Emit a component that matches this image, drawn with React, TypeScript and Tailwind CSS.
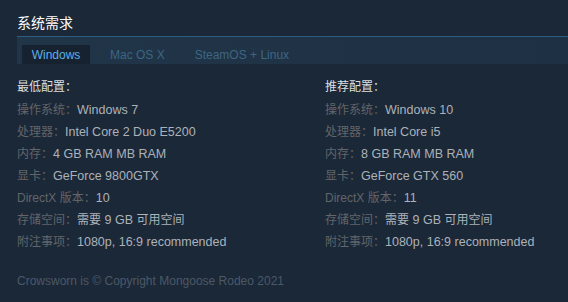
import React from "react";

const font = { fontFamily: '"Liberation Sans", Arial, "Noto Sans CJK SC", sans-serif' };

type Row = [string, string];

const minRows: Row[] = [
  ["操作系统：", "Windows 7"],
  ["处理器：", "Intel Core 2 Duo E5200"],
  ["内存：", "4 GB RAM MB RAM"],
  ["显卡：", "GeForce 9800GTX"],
  ["DirectX 版本：", "10"],
  ["存储空间：", "需要 9 GB 可用空间"],
  ["附注事项：", "1080p, 16:9 recommended"],
];
const recRows: Row[] = [
  ["操作系统：", "Windows 10"],
  ["处理器：", "Intel Core i5"],
  ["内存：", "8 GB RAM MB RAM"],
  ["显卡：", "GeForce GTX 560"],
  ["DirectX 版本：", "11"],
  ["存储空间：", "需要 9 GB 可用空间"],
  ["附注事项：", "1080p, 16:9 recommended"],
];

function Mixed({ text }: { text: string }) {
  const parts = text.split(/([\u3000-\u9fff\uff00-\uffef]+)/);
  return (
    <>
      {parts.map((p, i) =>
        /[\u3000-\u9fff\uff00-\uffef]/.test(p) ? (
          <span key={i} className="text-[12px]">
            {p}
          </span>
        ) : (
          <span key={i}>{p}</span>
        )
      )}
    </>
  );
}

function Col({ title, rows }: { title: string; rows: Row[] }) {
  return (
    <div className="flex flex-col">
      <div className="text-[12px] leading-[22px] h-[22px] text-[#dcdedf]">{title}</div>
      {rows.map(([k, v]) => (
        <div key={k} className="leading-[22px] h-[22px] whitespace-nowrap">
          <span className="text-[12px] text-[#626569]">{k}</span>
          <span className="text-[12.5px] text-[#acb2b8]">
            <Mixed text={v} />
          </span>
        </div>
      ))}
    </div>
  );
}

export default function App() {
  return (
    <div className="w-[568px] h-[302px] bg-[#1b2838] overflow-hidden" style={font}>
      <div className="pl-[17px] pt-[14px]">
        <div className="text-[14px] leading-[18px] text-[#ffffff] pb-[4px]">系统需求</div>
        <div className="h-[28px] border-t border-[#2d5d80] bg-[linear-gradient(to_right,#213549,#1e3043)] flex items-end pl-[5px]">
          <div className="h-[19px] w-[68px] bg-[#172230] text-[#5cb0e8] text-[12px] flex items-center justify-center">
            Windows
          </div>
          <div className="h-[19px] ml-[20px] text-[#3d6683] text-[12px] flex items-center">Mac OS X</div>
          <div className="h-[19px] ml-[30px] text-[#3d6683] text-[12px] flex items-center">SteamOS + Linux</div>
        </div>
        <div className="grid grid-cols-[308px_1fr] pt-[12px]">
          <Col title="最低配置：" rows={minRows} />
          <Col title="推荐配置：" rows={recRows} />
        </div>
        <div className="pt-[20px] text-[12px] text-[#4b5867]">
          Crowsworn is © Copyright Mongoose Rodeo 2021
        </div>
      </div>
    </div>
  );
}
